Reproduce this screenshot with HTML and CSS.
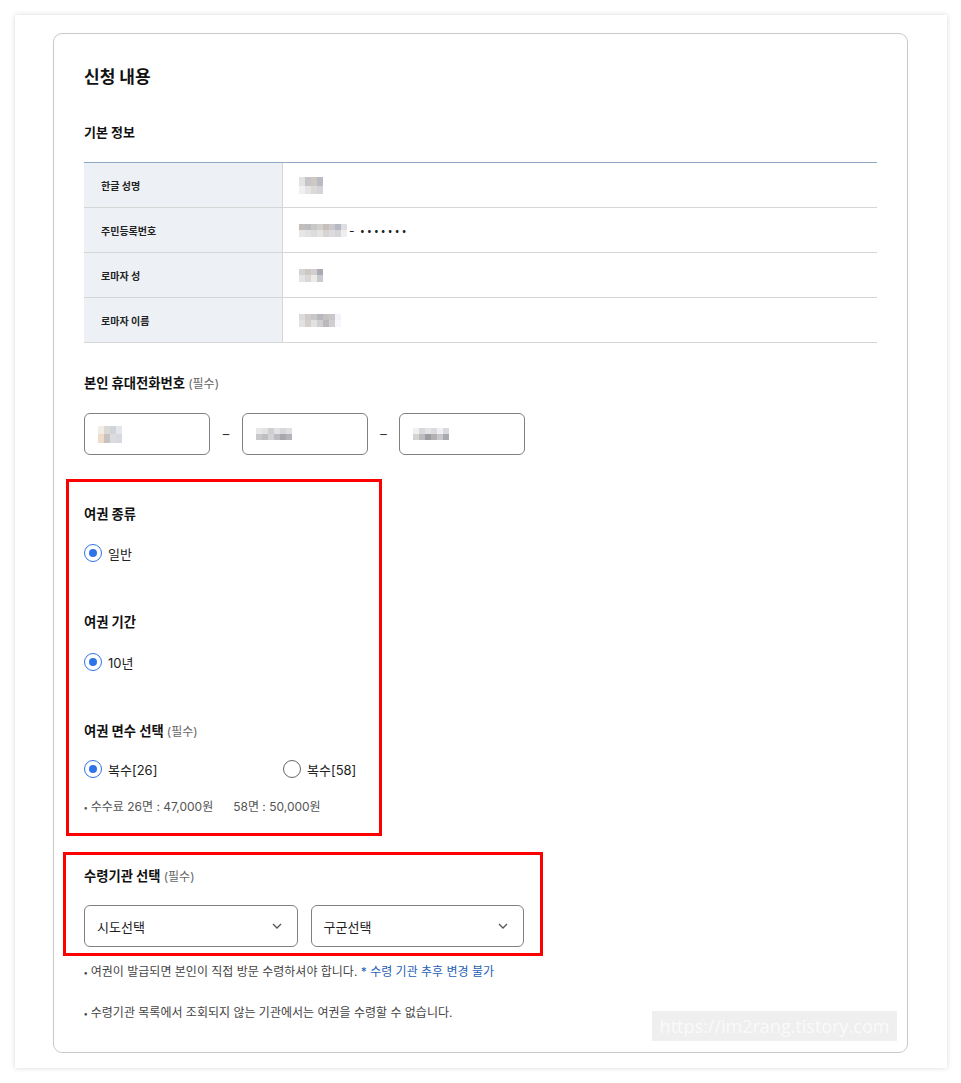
FILE: index.html
```html
<!DOCTYPE html>
<html lang="ko">
<head>
<meta charset="utf-8">
<title>신청 내용</title>
<link rel="stylesheet" href="styles.css">
</head>
<body>
<div class="panel">
  <div class="card">
    <h2 class="title">신청 내용</h2>
    <h3 class="sub">기본 정보</h3>
    <div class="info">
      <div class="th">한글 성명</div>
      <div class="td"><svg class="px" width="24" height="17" viewBox="0 0 24 17"><rect x="0" y="0" width="6" height="9" fill="#e2e2e4"/><rect x="6" y="0" width="6" height="9" fill="#c6c4c8"/><rect x="12" y="0" width="6" height="9" fill="#cdc8c2"/><rect x="18" y="0" width="6" height="9" fill="#b9bac2"/><rect x="0" y="9" width="6" height="8" fill="#f0f0f0"/><rect x="6" y="9" width="6" height="8" fill="#e4e4e4"/><rect x="12" y="9" width="6" height="8" fill="#dcdad6"/><rect x="18" y="9" width="6" height="8" fill="#d4d4d8"/></svg></div>
      <div class="th">주민등록번호</div>
      <div class="td"><svg class="px" width="48" height="13" viewBox="0 0 48 13"><rect x="0" y="0" width="6" height="6" fill="#c4bebb"/><rect x="6" y="0" width="6" height="6" fill="#bcbcc0"/><rect x="12" y="0" width="6" height="6" fill="#c8c8c8"/><rect x="18" y="0" width="6" height="6" fill="#d2d0cf"/><rect x="24" y="0" width="6" height="6" fill="#c8bfb8"/><rect x="30" y="0" width="6" height="6" fill="#c9c9cd"/><rect x="36" y="0" width="6" height="6" fill="#b7b8c0"/><rect x="42" y="0" width="6" height="6" fill="#dddde2"/><rect x="0" y="6" width="6" height="7" fill="#e6e6e6"/><rect x="6" y="6" width="6" height="7" fill="#e2e2e2"/><rect x="12" y="6" width="6" height="7" fill="#dcdcdc"/><rect x="18" y="6" width="6" height="7" fill="#e4e4e4"/><rect x="24" y="6" width="6" height="7" fill="#d7d4d2"/><rect x="30" y="6" width="6" height="7" fill="#dcdcde"/><rect x="36" y="6" width="6" height="7" fill="#d6d6da"/><rect x="42" y="6" width="6" height="7" fill="#eeeef0"/></svg><span class="dash-small">-</span><span class="dots">•••••••</span></div>
      <div class="th">로마자 성</div>
      <div class="td"><svg class="px" width="24" height="13" viewBox="0 0 24 13"><rect x="0" y="0" width="6" height="6" fill="#d6d2cf"/><rect x="6" y="0" width="6" height="6" fill="#cdc8c4"/><rect x="12" y="0" width="6" height="6" fill="#d2cfcc"/><rect x="18" y="0" width="6" height="6" fill="#a8aab4"/><rect x="0" y="6" width="6" height="7" fill="#e4e4e4"/><rect x="6" y="6" width="6" height="7" fill="#dad8d6"/><rect x="12" y="6" width="6" height="7" fill="#ecebea"/><rect x="18" y="6" width="6" height="7" fill="#c9cace"/></svg></div>
      <div class="th">로마자 이름</div>
      <div class="td"><svg class="px" width="42" height="13" viewBox="0 0 42 13"><rect x="0" y="0" width="6" height="6" fill="#dcdcdc"/><rect x="6" y="0" width="6" height="6" fill="#d0ccca"/><rect x="12" y="0" width="6" height="6" fill="#c8c8cc"/><rect x="18" y="0" width="6" height="6" fill="#b9b8bc"/><rect x="24" y="0" width="6" height="6" fill="#c6c2c2"/><rect x="30" y="0" width="6" height="6" fill="#c8c8ca"/><rect x="36" y="0" width="6" height="6" fill="#f2f4fa"/><rect x="0" y="6" width="6" height="7" fill="#e2e2e2"/><rect x="6" y="6" width="6" height="7" fill="#d4d0ce"/><rect x="12" y="6" width="6" height="7" fill="#e2e2e2"/><rect x="18" y="6" width="6" height="7" fill="#d0d0d2"/><rect x="24" y="6" width="6" height="7" fill="#bcb8bc"/><rect x="30" y="6" width="6" height="7" fill="#cfcfd2"/><rect x="36" y="6" width="6" height="7" fill="#f6f8fc"/></svg></div>
    </div>

    <h3 class="label phone-label">본인 휴대전화번호 <span class="req">(필수)</span></h3>
    <div class="phone">
      <div class="field"><svg class="px" width="24" height="17" viewBox="0 0 24 17"><rect x="0" y="0" width="6" height="8" fill="#f2ece6"/><rect x="6" y="0" width="6" height="8" fill="#dcd8d6"/><rect x="12" y="0" width="6" height="8" fill="#ced4da"/><rect x="18" y="0" width="6" height="8" fill="#e4e6ea"/><rect x="0" y="8" width="6" height="9" fill="#f0dcc6"/><rect x="6" y="8" width="6" height="9" fill="#c6c2c2"/><rect x="12" y="8" width="6" height="9" fill="#dcdce0"/><rect x="18" y="8" width="6" height="9" fill="#d6dae0"/></svg></div>
      <span class="dash">–</span>
      <div class="field"><svg class="px" width="36" height="12" viewBox="0 0 36 12"><rect x="0" y="0" width="6" height="6" fill="#e8e8ea"/><rect x="6" y="0" width="6" height="6" fill="#e2e2e2"/><rect x="12" y="0" width="6" height="6" fill="#cfcfd2"/><rect x="18" y="0" width="6" height="6" fill="#e2e2e4"/><rect x="24" y="0" width="6" height="6" fill="#d8d8da"/><rect x="30" y="0" width="6" height="6" fill="#e0e0e2"/><rect x="0" y="6" width="6" height="6" fill="#c8c8ca"/><rect x="6" y="6" width="6" height="6" fill="#bebec2"/><rect x="12" y="6" width="6" height="6" fill="#d2d2d4"/><rect x="18" y="6" width="6" height="6" fill="#bcbcbe"/><rect x="24" y="6" width="6" height="6" fill="#a8a8ac"/><rect x="30" y="6" width="6" height="6" fill="#b4b4b8"/></svg></div>
      <span class="dash dash-two">–</span>
      <div class="field"><svg class="px" width="36" height="12" viewBox="0 0 36 12"><rect x="0" y="0" width="6" height="6" fill="#f0f0f0"/><rect x="6" y="0" width="6" height="6" fill="#d8d8da"/><rect x="12" y="0" width="6" height="6" fill="#e4e4e6"/><rect x="18" y="0" width="6" height="6" fill="#dcdcdf"/><rect x="24" y="0" width="6" height="6" fill="#eef0f4"/><rect x="30" y="0" width="6" height="6" fill="#d8dade"/><rect x="0" y="6" width="6" height="6" fill="#d6d2d0"/><rect x="6" y="6" width="6" height="6" fill="#bcbcc0"/><rect x="12" y="6" width="6" height="6" fill="#9c9ca2"/><rect x="18" y="6" width="6" height="6" fill="#b4b0b0"/><rect x="24" y="6" width="6" height="6" fill="#c6c8cc"/><rect x="30" y="6" width="6" height="6" fill="#a8aab0"/></svg></div>
    </div>

    <div class="mark mark-one">
      <h3 class="label">여권 종류</h3>
      <div class="radios first"><label class="radio"><span class="dot on"></span>일반</label></div>
      <h3 class="label gap-big">여권 기간</h3>
      <div class="radios second"><label class="radio"><span class="dot on"></span>10년</label></div>
      <h3 class="label gap-big">여권 면수 선택 <span class="req">(필수)</span></h3>
      <div class="radios third">
        <label class="radio wide"><span class="dot on"></span>복수[26]</label>
        <label class="radio"><span class="dot"></span>복수[58]</label>
      </div>
      <p class="fee"><span class="bul">•</span> 수수료 26면 : 47,000원<span class="fee-gap"></span>58면 : 50,000원</p>
    </div>

    <div class="mark mark-two">
      <h3 class="label">수령기관 선택 <span class="req">(필수)</span></h3>
      <div class="selects">
        <div class="select">시도선택<svg class="chev" width="10" height="6" viewBox="0 0 10 6"><path d="M1 1 L5 5 L9 1" fill="none" stroke="#555" stroke-width="1.3"/></svg></div>
        <div class="select">구군선택<svg class="chev" width="10" height="6" viewBox="0 0 10 6"><path d="M1 1 L5 5 L9 1" fill="none" stroke="#555" stroke-width="1.3"/></svg></div>
      </div>
    </div>

    <p class="note"><span class="bul">•</span> 여권이 발급되면 본인이 직접 방문 수령하셔야 합니다. <span class="blue">* 수령 기관 추후 변경 불가</span></p>
    <p class="note note-two"><span class="bul">•</span> 수령기관 목록에서 조회되지 않는 기관에서는 여권을 수령할 수 없습니다.</p>

    <div class="watermark">https://im2rang.tistory.com</div>
  </div>
</div>
</body>
</html>
```

FILE: styles.css
```css
* { box-sizing: border-box; }
html, body { margin: 0; padding: 0; background: #ffffff; }
body {
  font-family: Inter, "Noto Sans CJK KR", sans-serif;
  color: #111;
  padding: 15px 14px 15px 15px;
}
.panel {
  width: 932px;
  height: 1053px;
  background: #fff;
  box-shadow: 0 0 5px rgba(0,0,0,0.16);
  padding: 18px 0 0 38px;
}
.card {
  position: relative;
  width: 855px;
  height: 1020px;
  border: 1px solid #c9c9c9;
  border-radius: 9px;
  padding: 30px 30px 0 30px;
}
.title {
  margin: 0;
  height: 26px;
  font-size: 17px;
  line-height: 26px;
  font-weight: 700;
  color: #111;
}
.sub {
  margin: 32px 0 0;
  height: 20px;
  font-size: 13px;
  line-height: 20px;
  font-weight: 700;
}
.info {
  margin-top: 20px;
  display: grid;
  grid-template-columns: 199px 1fr;
  border-top: 1px solid #8ea8c6;
}
.th, .td {
  height: 45px;
  border-bottom: 1px solid #d6d6d6;
  display: flex;
  align-items: center;
}
.th {
  background: #edf0f5;
  border-right: 1px solid #d6d6d6;
  padding-left: 17px;
  font-size: 10px;
  font-weight: 700;
  color: #222;
}
.td { padding-left: 16px; }
.px { display: block; }
.dash-small {
  font-size: 12px;
  color: #222;
  margin-left: 2px;
}
.dots {
  font-family: "Noto Sans CJK KR", sans-serif;
  font-size: 11px;
  color: #222;
  margin-left: 6px;
  letter-spacing: 3.2px;
}
.label {
  margin: 0;
  height: 20px;
  font-size: 13.3px;
  line-height: 20px;
  font-weight: 700;
  color: #111;
}
.req {
  font-size: 12px;
  line-height: 20px;
  font-weight: 400;
  color: #666;
}
.phone-label { margin-top: 30px; }
.phone {
  margin-top: 20px;
  display: flex;
  align-items: center;
}
.field {
  width: 126px;
  height: 42px;
  border: 1px solid #808080;
  border-radius: 6px;
  display: flex;
  align-items: center;
  padding-left: 13px;
}
.dash {
  width: 32px;
  text-align: center;
  font-size: 13px;
  color: #333;
}
.dash-two { width: 31px; }
.mark {
  border: 3px solid #ff0000;
}
.mark-one {
  margin: 24px 0 0 -18px;
  width: 316px;
  padding: 22px 15px 17px 15px;
}
.radios {
  display: flex;
  align-items: center;
  height: 24px;
}
.radios.first { margin-top: 17px; }
.radios.second { margin-top: 18px; }
.radios.third { margin-top: 16px; }
.gap-big { margin-top: 47px; }
.radio {
  display: flex;
  align-items: center;
  font-size: 13px;
  color: #222;
}
.radio.wide { width: 199px; }
.dot {
  width: 18px;
  height: 18px;
  border-radius: 50%;
  border: 1.5px solid #666;
  margin-right: 6px;
  display: inline-flex;
  align-items: center;
  justify-content: center;
}
.dot.on { border-color: #2f74e6; }
.dot.on::after {
  content: "";
  width: 8px;
  height: 8px;
  border-radius: 50%;
  background: #2f74e6;
}
.fee {
  margin: 17px 0 0;
  height: 18px;
  font-size: 12px;
  line-height: 18px;
  color: #555;
}
.bul {
  font-family: "Noto Sans CJK KR", sans-serif;
  font-size: 10px;
}
.fee-gap { display: inline-block; width: 20px; }
.mark-two {
  margin: 16px 0 0 -21px;
  width: 480px;
  padding: 11px 16px 6px 18px;
}
.selects {
  margin-top: 19px;
  display: flex;
  gap: 13px;
}
.select {
  flex: 1;
  height: 42px;
  border: 1px solid #808080;
  border-radius: 6px;
  display: flex;
  align-items: center;
  justify-content: space-between;
  padding: 0 15px 0 12px;
  font-size: 13px;
  color: #222;
}
.chev { display: block; }
.note {
  margin: 7px 0 0;
  height: 18px;
  font-size: 12px;
  line-height: 18px;
  color: #444;
}
.note-two { margin-top: 23px; }
.blue { color: #1f5fb6; }
.watermark {
  position: absolute;
  right: 10px;
  bottom: 11px;
  width: 245px;
  height: 30px;
  background: #efefef;
  color: #fafafa;
  font-family: "Open Sans", sans-serif;
  font-size: 18px;
  line-height: 30px;
  text-align: center;
  white-space: nowrap;
}
```
